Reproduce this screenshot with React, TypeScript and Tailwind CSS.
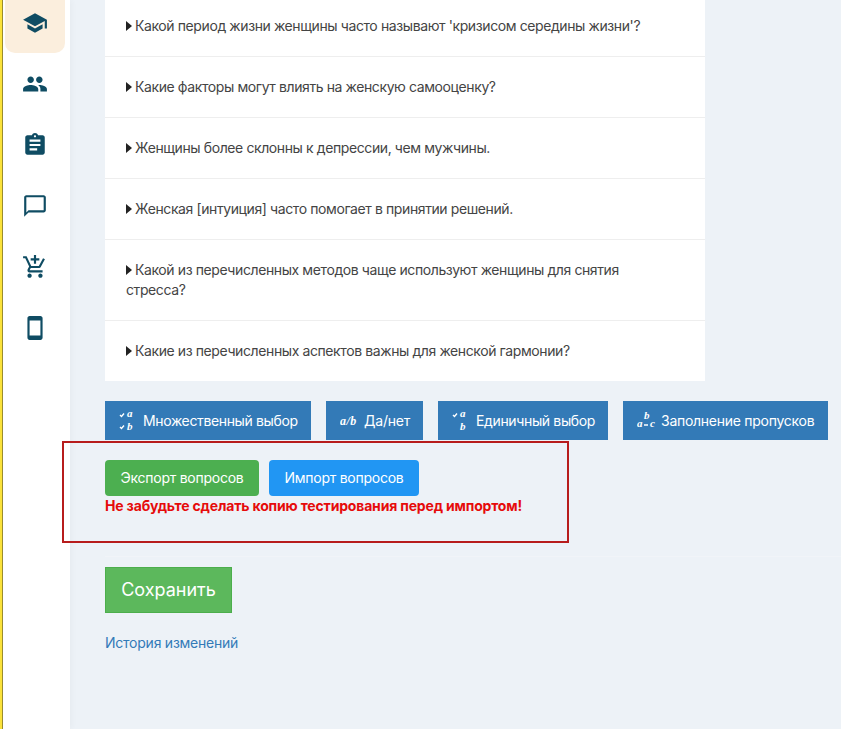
import React from "react";
import {
  MdSchool,
  MdPeople,
  MdAssignment,
  MdChatBubbleOutline,
  MdOutlineAddShoppingCart,
  MdStayCurrentPortrait,
} from "react-icons/md";

const questions = [
  "Какой период жизни женщины часто называют 'кризисом середины жизни'?",
  "Какие факторы могут влиять на женскую самооценку?",
  "Женщины более склонны к депрессии, чем мужчины.",
  "Женская [интуиция] часто помогает в принятии решений.",
  "Какой из перечисленных методов чаще используют женщины для снятия стресса?",
  "Какие из перечисленных аспектов важны для женской гармонии?",
];

const navIcons = [
  MdAssignment,
  MdChatBubbleOutline,
  MdOutlineAddShoppingCart,
  MdStayCurrentPortrait,
];

type MathKind = "multi" | "yesno" | "single" | "gap";

// маленькие значки формул на синих кнопках
function MathIcon({ kind }: { kind: MathKind }) {
  const letter = "fill-white text-[11px] italic font-bold";
  const font = { fontFamily: "'Liberation Serif', serif" };
  return (
    <svg width="20" height="26" viewBox="0 0 20 26" className="shrink-0">
      {(kind === "multi" || kind === "single") && (
        <g style={font}>
          <path d="M3 7l1.5 1.5L7 5.5" className="fill-none stroke-white" strokeWidth="1.4" />
          <text x="10" y="9" className={letter}>a</text>
          {kind === "multi" && (
            <path d="M3 19l1.5 1.5L7 17.5" className="fill-none stroke-white" strokeWidth="1.4" />
          )}
          <text x="10" y="22" className={letter}>b</text>
        </g>
      )}
      {kind === "yesno" && (
        <text x="0" y="17" className="fill-white text-[12px] italic font-bold tracking-[0.5px]" style={font}>a/b</text>
      )}
      {kind === "gap" && (
        <g style={font}>
          <text x="0" y="19" className={letter}>a</text>
          <text x="7" y="11" className={letter}>b</text>
          <path d="M7 17h4" className="stroke-white" strokeWidth="1.5" />
          <text x="13" y="19" className={letter}>c</text>
        </g>
      )}
    </svg>
  );
}

function TypeButton({
  kind,
  label,
  className,
}: {
  kind: MathKind;
  label: string;
  className: string;
}) {
  return (
    <button className={`flex h-[39px] items-center bg-[#337ab7] text-sm text-white ${className}`}>
      <MathIcon kind={kind} />
      <span>{label}</span>
    </button>
  );
}

export default function App() {
  return (
    <div
      className="flex h-[729px] overflow-hidden bg-[#edf2f7] text-sm text-[#444]"
      style={{ fontFamily: "Inter, 'Noto Sans', sans-serif" }}
    >
      {/* боковое меню */}
      <aside className="flex w-[70px] shrink-0 flex-col items-center border-l-2 border-[#fbe23a] bg-white pr-[2px] shadow-[inset_1px_0_0_#9a8c2e,2px_0_6px_rgba(0,0,0,0.03)]">
        <div className="-mt-[8px] flex h-[61px] w-[60px] items-center justify-center rounded-b-[10px] bg-[#fbeedd] text-[#0f4c63]">
          <MdSchool size={26} />
        </div>
        <div className="flex h-[61px] items-center justify-center text-[#0f4c63]">
          <MdPeople size={26} />
        </div>
        {navIcons.map((Icon, i) => (
          <div key={i} className="flex h-[61px] items-center justify-center text-[#0f4c63]">
            <Icon size={26} />
          </div>
        ))}
      </aside>

      <main className="flex-1 pl-[35px]">
        <div className="-mt-[4px] w-[600px] bg-white">
          {questions.map((q, i) => (
            <div
              key={i}
              className={`py-[20px] pr-[50px] pl-[21px] leading-[20px] tracking-[-0.4px] ${i > 0 ? "border-t border-[#eeeeee]" : ""}`}
            >
              <span className="mr-[3px] inline-block h-0 w-0 border-y-[5px] border-l-[6px] border-y-transparent border-l-[#222]" />
              {q}
            </div>
          ))}
        </div>

        <div className="mt-[20px] flex gap-[15px]">
          <TypeButton kind="multi" label="Множественный выбор" className="w-[206px] gap-[6px] pl-[12px] tracking-[-0.36px]" />
          <TypeButton kind="yesno" label="Да/нет" className="w-[97px] gap-[4px] pl-[14px] tracking-[-0.2px]" />
          <TypeButton kind="single" label="Единичный выбор" className="w-[170px] gap-[6px] pl-[12px] tracking-[-0.36px]" />
          <TypeButton kind="gap" label="Заполнение пропусков" className="w-[205px] gap-[4px] pl-[14px] tracking-[-0.27px]" />
        </div>

        <div className="relative mt-[20px]">
          <div className="flex gap-[10px]">
            <button className="h-[36px] w-[154px] rounded bg-[#4caf50] text-sm tracking-[-0.25px] text-white">
              Экспорт вопросов
            </button>
            <button className="h-[36px] w-[150px] rounded bg-[#2196f3] text-sm tracking-[-0.25px] text-white">
              Импорт вопросов
            </button>
          </div>
          <p className="leading-[20px] font-bold tracking-[-0.17px] text-[#e60b0b]">
            Не забудьте сделать копию тестирования перед импортом!
          </p>
          {/* красная рамка поверх блока */}
          <div className="absolute -top-[19px] -left-[43px] h-[102px] w-[507px] border-2 border-[#b71c1c]" />
        </div>

        <div className="mt-[40px] border-t border-[#f1f4f8] pt-[10px]">
          <button className="h-[46px] w-[127px] border border-[#4cae4c] bg-[#5cb85c] text-lg text-white">
            Сохранить
          </button>
          <div className="mt-[20px] tracking-[-0.24px]">
            <a className="text-[#337ab7]">История изменений</a>
          </div>
        </div>
      </main>
    </div>
  );
}
